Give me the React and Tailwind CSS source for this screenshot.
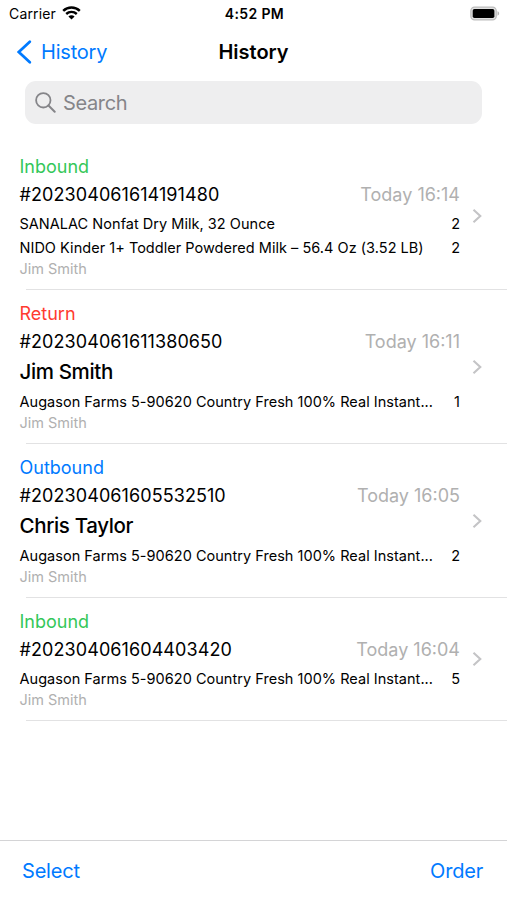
import clsx from 'clsx';

const orders = [
  {
    id: '202304061614191480',
    type: 'Inbound',
    time: 'Today 16:14',
    items: [
      { name: 'SANALAC Nonfat Dry Milk, 32 Ounce', qty: 2 },
      { name: 'NIDO Kinder 1+ Toddler Powdered Milk – 56.4 Oz (3.52 LB)', qty: 2 },
    ],
    user: 'Jim Smith',
  },
  {
    id: '202304061611380650',
    type: 'Return',
    time: 'Today 16:11',
    customer: 'Jim Smith',
    items: [{ name: 'Augason Farms 5-90620 Country Fresh 100% Real Instant...', qty: 1 }],
    user: 'Jim Smith',
  },
  {
    id: '202304061605532510',
    type: 'Outbound',
    time: 'Today 16:05',
    customer: 'Chris Taylor',
    items: [{ name: 'Augason Farms 5-90620 Country Fresh 100% Real Instant...', qty: 2 }],
    user: 'Jim Smith',
  },
  {
    id: '202304061604403420',
    type: 'Inbound',
    time: 'Today 16:04',
    items: [{ name: 'Augason Farms 5-90620 Country Fresh 100% Real Instant...', qty: 5 }],
    user: 'Jim Smith',
  },
];

const typeColors = {
  Inbound: 'text-[#34c759]',
  Return: 'text-[#ff3b30]',
  Outbound: 'text-[#007aff]',
};

const StatusBar = () => (
  <div className="grid h-7 grid-cols-3 items-center pl-[9px] pr-[7px] text-[14px] leading-none">
    <div className="flex items-center gap-[6px] tracking-[0.15px]">
      <span>Carrier</span>
      <svg className="-mt-[2px] h-[14px] w-[19px]" viewBox="0 0 19 14" fill="none" stroke="black">
        <path d="M1.2 4.9C5.9.5 13.1.5 17.8 4.9" strokeWidth="2.5" />
        <path d="M4.2 8C7.2 5.2 11.8 5.2 14.8 8" strokeWidth="2.4" />
        <path d="M9.5 13.6 6.4 10.4c1.8-1.5 4.4-1.5 6.2 0z" fill="black" stroke="none" />
      </svg>
    </div>
    <span className="text-center font-semibold tracking-[0.35px]">4:52 PM</span>
    <svg className="-mt-[2px] ml-auto h-[15px] w-[30px]" viewBox="0 0 31 15">
      <rect x="0.9" y="0.9" width="26.2" height="13.2" rx="3.8" fill="#e2e2e2" stroke="#bdbdbd" strokeWidth="1.3" />
      <rect x="2.8" y="2.8" width="22.4" height="9.4" rx="1.8" fill="black" />
      <path d="M28.4 5.2c2.3.7 2.3 3.9 0 4.6z" fill="#b5b5b5" />
    </svg>
  </div>
);

const OrderRow = ({ order }) => (
  <li>
    <div className="flex items-center pl-[19.5px] pr-[24px] pt-[10px] pb-[12px]">
      <div className="min-w-0 flex-1">
        <p className={clsx('text-[18px] leading-[27px]', typeColors[order.type])}>{order.type}</p>
        <div className="flex justify-between text-[18px] leading-[29px]">
          <span className="tracking-[0.08px]">#{order.id}</span>
          <span className="text-[#b0b0b0]">{order.time}</span>
        </div>
        {order.customer && (
          <p className="text-[20.5px] font-medium leading-[31px] tracking-[-0.35px]">{order.customer}</p>
        )}
        <div className="mt-[3px]">
          {order.items.map((item) => (
            <div key={item.name} className="flex justify-between whitespace-nowrap text-[14.5px] leading-6">
              <span className="tracking-[0.03px]">{item.name}</span>
              <span>{item.qty}</span>
            </div>
          ))}
        </div>
        <p className="text-[14.5px] leading-[17px] text-[#b0b0b0]">{order.user}</p>
      </div>
      <svg className="ml-[12px] mt-[2px] h-4 w-[11px] shrink-0" viewBox="0 0 11 16" fill="none" stroke="#c4c4c6" strokeWidth="2.1">
        <path d="M1.5 1.7 8.3 8 1.5 14.3" />
      </svg>
    </div>
    <div className="ml-[26px] h-px bg-[#e2e2e3]" />
  </li>
);

export default function App() {
  return (
    <div className="flex h-[900px] w-[507px] flex-col overflow-hidden bg-white font-['Inter',sans-serif] text-black">
      <StatusBar />

      <header className="grid h-12 grid-cols-3 items-center px-[17px] text-[20px]">
        <button className="flex items-center gap-[9px] tracking-[-0.2px] text-[#007aff]">
          <svg className="h-6 w-[15px]" viewBox="0 0 15 24" fill="none" stroke="currentColor" strokeWidth="2.7">
            <path d="M12.8 1.7 1.8 12l11 10.3" strokeLinecap="round" />
          </svg>
          History
        </button>
        <h1 className="text-center font-semibold">History</h1>
      </header>

      <div className="mx-[25px] mt-[5px] flex h-[43px] items-center gap-[7px] rounded-[11px] bg-[#eeeeef] pl-[10px] text-[20px] tracking-[-0.35px] text-[#858589]">
        <svg className="h-[21px] w-[21px]" viewBox="0 0 21 21" fill="none" stroke="currentColor" strokeWidth="1.8">
          <circle cx="8.3" cy="8.3" r="7.2" />
          <path d="m13.5 13.5 6.2 6.2" strokeLinecap="round" strokeWidth="2" />
        </svg>
        Search
      </div>

      <ul className="mt-[19px] flex-1">
        {orders.map((order) => (
          <OrderRow key={order.id} order={order} />
        ))}
      </ul>

      <footer className="flex h-[60px] items-center justify-between border-t border-[#d4d4d6] pl-[22px] pr-6 text-[20px] tracking-[-0.2px] text-[#007aff]">
        <button>Select</button>
        <button>Order</button>
      </footer>
    </div>
  );
}
